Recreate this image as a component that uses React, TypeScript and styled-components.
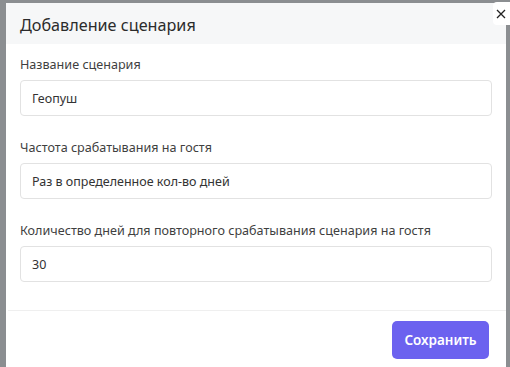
import styled, { createGlobalStyle } from "styled-components";

const GlobalStyle = createGlobalStyle`
  html, body {
    margin: 0;
    padding: 0;
    background: #8b8e91;
    overflow: hidden;
  }
  * {
    box-sizing: border-box;
  }
`;

const Backdrop = styled.div`
  position: relative;
  width: 510px;
  height: 367px;
  padding: 3px 0 0 6px;
  font-family: "Noto Sans", "Open Sans", sans-serif;
`;

const Modal = styled.div`
  width: 500px;
  height: 380px;
  background: #ffffff;
  display: flex;
  flex-direction: column;
`;

const Header = styled.div`
  height: 41px;
  background: #f6f7f8;
  display: flex;
  align-items: center;
  padding: 2px 14px 0;
`;

const Title = styled.h2`
  margin: 0;
  font-size: 16.2px;
  font-weight: 400;
  color: #2b2b2b;
`;

const CloseButton = styled.button`
  position: absolute;
  top: 2px;
  left: 493px;
  width: 22px;
  height: 23px;
  border: none;
  border-radius: 4px;
  background: #ffffff;
  padding: 0 0 0 3px;
  display: flex;
  align-items: center;
  justify-content: flex-start;
`;

const Body = styled.div`
  padding: 11px 14px 0;
  display: flex;
  flex-direction: column;
  gap: 22px;
`;

const Field = styled.div`
  display: flex;
  flex-direction: column;
  gap: 5px;
`;

const Label = styled.label`
  font-size: 12.6px;
  line-height: 20px;
  color: #3f3f3f;
`;

const Input = styled.div`
  height: 36px;
  border: 1px solid #e2e2e2;
  border-radius: 4px;
  padding: 0 11px;
  display: flex;
  align-items: center;
  font-size: 12.5px;
  color: #333333;
`;

const Footer = styled.div`
  margin-top: 28px;
  margin-left: 2px;
  border-top: 1px solid #efefef;
  display: flex;
  justify-content: flex-end;
  padding: 10px 17px 0 0;
`;

const SaveButton = styled.button`
  width: 97px;
  height: 38px;
  border: none;
  border-radius: 5px;
  background: #6c62ef;
  color: #ffffff;
  font-family: "Noto Sans", "Open Sans", sans-serif;
  font-size: 13.5px;
  font-weight: 600;
`;

const fields = [
  { label: "Название сценария", value: "Геопуш" },
  { label: "Частота срабатывания на гостя", value: "Раз в определенное кол-во дней" },
  {
    label: "Количество дней для повторного срабатывания сценария на гостя",
    value: "30",
  },
];

export default function App() {
  return (
    <>
      <GlobalStyle />
      <Backdrop>
        <Modal>
          <Header>
            <Title>Добавление сценария</Title>
          </Header>
          <Body>
            {fields.map((f) => (
              <Field key={f.label}>
                <Label>{f.label}</Label>
                <Input>{f.value}</Input>
              </Field>
            ))}
          </Body>
          <Footer>
            <SaveButton>Сохранить</SaveButton>
          </Footer>
        </Modal>
        <CloseButton aria-label="Закрыть">
          <svg width="10" height="10" viewBox="0 0 10 10">
            <path d="M1 1L9 9M9 1L1 9" stroke="#222" strokeWidth="1.3" />
          </svg>
        </CloseButton>
      </Backdrop>
    </>
  );
}
